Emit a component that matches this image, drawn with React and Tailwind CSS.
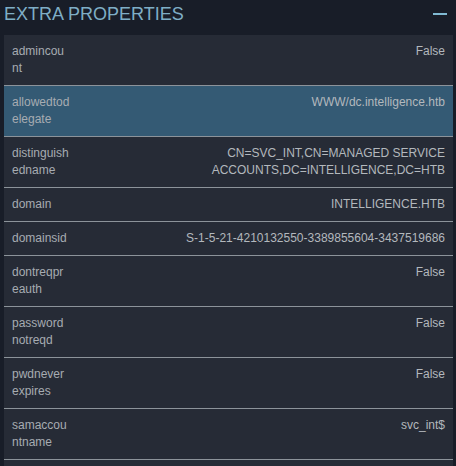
import React from "react";

const rows = [
  { k: "admincount", v: "False" },
  { k: "allowedtodelegate", v: "WWW/dc.intelligence.htb", hl: true },
  { k: "distinguishedname", v: "CN=SVC_INT,CN=MANAGED SERVICE ACCOUNTS,DC=INTELLIGENCE,DC=HTB" },
  { k: "domain", v: "INTELLIGENCE.HTB" },
  { k: "domainsid", v: "S-1-5-21-4210132550-3389855604-3437519686" },
  { k: "dontreqpreauth", v: "False" },
  { k: "passwordnotreqd", v: "False" },
  { k: "pwdneverexpires", v: "False" },
  { k: "samaccountname", v: "svc_int$" },
];

export default function App() {
  return (
    <div
      className="w-[456px] h-[466px] overflow-hidden flex flex-col bg-[#181d28] pl-1 pr-[3px]"
      style={{ fontFamily: '"Liberation Sans", Arial, sans-serif' }}
    >
      <div className="h-[35px] shrink-0 pt-[5px] flex justify-between">
        <span className="text-[18px] leading-[18px] text-[#7faec6]">EXTRA PROPERTIES</span>
        <div className="w-[14px] h-[2px] bg-[#80bad3] mt-[8px] mr-[6px]" />
      </div>
      <div className="flex-1 bg-[#262b36]">
        {rows.map((r) => (
          <div
            key={r.k}
            className={`flex border-b border-[#8c939a] py-2 px-2 text-[12px] leading-[17px] ${
              r.hl ? "bg-[#345a74]" : ""
            }`}
          >
            <div className="w-[57.7px] shrink-0 text-[#a7acb2] [overflow-wrap:anywhere]">{r.k}</div>
            <div className="flex-1 text-right text-[#b3b8bd] pl-4">{r.v}</div>
          </div>
        ))}
      </div>
    </div>
  );
}
